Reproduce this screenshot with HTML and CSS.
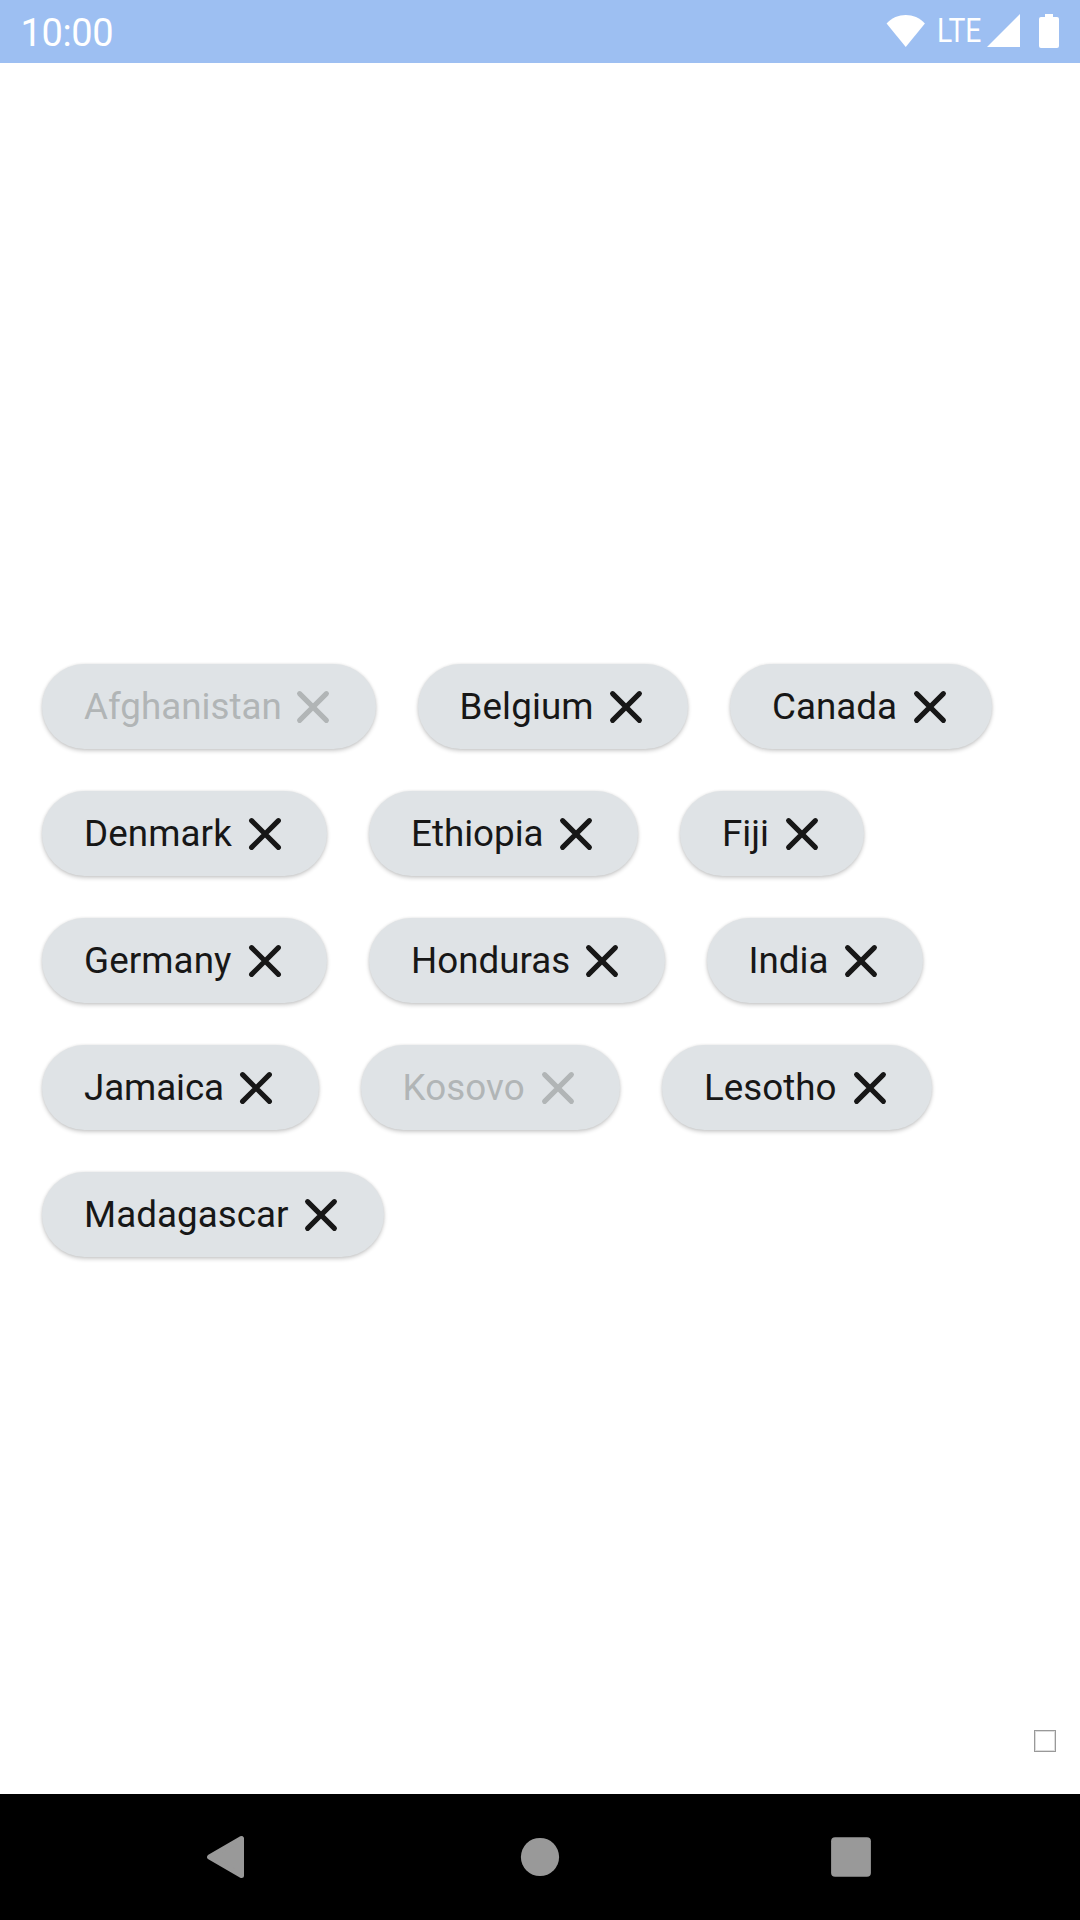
FILE: index.html
```html
<!DOCTYPE html>
<html lang="en">
<head>
<meta charset="utf-8">
<title>Countries</title>
<link rel="stylesheet" href="styles.css">
</head>
<body>
<svg class="symbols" aria-hidden="true">
  <symbol id="close" viewBox="0 0 42 42"><path d="M7.6 7.6L34.4 34.4M34.4 7.6L7.6 34.4" fill="none" stroke="currentColor" stroke-width="5.1" stroke-linecap="round"/></symbol>
</svg>
<header class="status-bar">
  <span class="clock">10:00</span>
  <svg class="wifi" viewBox="0 0 40 34" preserveAspectRatio="none"><path d="M.6 9.5C11 -1.8 29-1.8 39.4 9.5L20 33Z" fill="#fff"/></svg>
  <span class="network">LTE</span>
  <svg class="signal" viewBox="0 0 33 33"><path d="M33 0V33H0Z" fill="#fff"/></svg>
  <svg class="battery" viewBox="0 0 20 34"><path d="M6 0H14V3H18Q20 3 20 5V32Q20 34 18 34H2Q0 34 0 32V5Q0 3 2 3H6Z" fill="#fff"/></svg>
</header>
<main class="content">
  <div class="chips">
    <div class="chip afghanistan disabled"><span>Afghanistan</span><svg class="close"><use href="#close"/></svg></div>
    <div class="chip belgium"><span>Belgium</span><svg class="close"><use href="#close"/></svg></div>
    <div class="chip canada"><span>Canada</span><svg class="close"><use href="#close"/></svg></div>
    <div class="chip denmark"><span>Denmark</span><svg class="close"><use href="#close"/></svg></div>
    <div class="chip ethiopia"><span>Ethiopia</span><svg class="close"><use href="#close"/></svg></div>
    <div class="chip fiji"><span>Fiji</span><svg class="close"><use href="#close"/></svg></div>
    <div class="chip germany"><span>Germany</span><svg class="close"><use href="#close"/></svg></div>
    <div class="chip honduras"><span>Honduras</span><svg class="close"><use href="#close"/></svg></div>
    <div class="chip india"><span>India</span><svg class="close"><use href="#close"/></svg></div>
    <div class="chip jamaica"><span>Jamaica</span><svg class="close"><use href="#close"/></svg></div>
    <div class="chip kosovo disabled"><span>Kosovo</span><svg class="close"><use href="#close"/></svg></div>
    <div class="chip lesotho"><span>Lesotho</span><svg class="close"><use href="#close"/></svg></div>
    <div class="chip madagascar"><span>Madagascar</span><svg class="close"><use href="#close"/></svg></div>
  </div>
  <div class="marker"></div>
</main>
<nav class="nav-bar">
  <svg class="nav-icon" viewBox="0 0 44 44"><path d="M2.6 22L34.5 3.5V40.5Z" fill="#999" stroke="#999" stroke-width="5" stroke-linejoin="round"/></svg>
  <svg class="nav-icon" viewBox="0 0 44 44"><circle cx="22" cy="22" r="19.1" fill="#999"/></svg>
  <svg class="nav-icon" viewBox="0 0 44 44"><rect x="2.1" y="2.2" width="39.8" height="39.6" rx="4" fill="#999"/></svg>
</nav>
</body>
</html>
```
FILE: styles.css
```css
* { box-sizing: border-box; }
body {
  margin: 0;
  width: 1080px;
  height: 1920px;
  display: flex;
  flex-direction: column;
  overflow: hidden;
  background: #fff;
  font-family: Roboto, sans-serif;
}
svg { display: block; flex: none; }
.symbols { position: absolute; width: 0; height: 0; }
.status-bar {
  height: 63px;
  padding: 0 21px 0 20.5px;
  display: flex;
  align-items: flex-start;
  background: #9dbff2;
  color: #fff;
}
.clock {
  flex: 1;
  padding-top: 10px;
  font-size: 38px;
  line-height: 46px;
  letter-spacing: -.4px;
}
.wifi { width: 39.5px; height: 34px; margin-top: 14px; }
.network {
  width: 43px;
  margin: 12px 7px 0 11.5px;
  font-size: 32.5px;
  line-height: 38px;
  transform: scaleX(.87);
  transform-origin: left;
}
.signal { width: 33px; height: 33px; margin: 14px 19px 0 0; }
.battery { width: 20px; height: 34px; margin-top: 14px; }
.content {
  flex: 1;
  display: flex;
  flex-direction: column;
  padding: 601px 21px 42px 42px;
}
.chips {
  width: 960px;
  display: flex;
  flex-wrap: wrap;
  gap: 42px;
}
.chip {
  height: 85px;
  padding: 0 41.5px 0 42px;
  display: flex;
  align-items: center;
  justify-content: space-between;
  border-radius: 43px;
  background: #dfe3e6;
  color: #171717;
  font-size: 36.75px;
  line-height: 43px;
  box-shadow: 0 2px 4px rgba(0, 0, 0, .2), 0 0 3px rgba(0, 0, 0, .08);
}
.disabled { color: #b1b5b6; }
.afghanistan { width: 333.5px; }
.belgium { width: 270.5px; letter-spacing: .12px; }
.canada { width: 262px; }
.denmark, .germany { width: 285px; letter-spacing: .1px; }
.ethiopia { width: 269px; }
.fiji { width: 184px; }
.honduras { width: 295.5px; }
.india { width: 216.5px; }
.jamaica { width: 276.5px; letter-spacing: -.1px; }
.kosovo { width: 259.5px; letter-spacing: .1px; }
.lesotho { width: 270px; }
.madagascar { width: 341.5px; letter-spacing: .05px; }
.close { width: 42px; height: 42px; }
.marker {
  width: 22px;
  height: 22px;
  margin: auto 3px 0 auto;
  border: 1px solid #999;
  box-shadow: inset 0 0 0 1px #ddd;
}
.nav-bar {
  height: 126px;
  padding: 0 207px;
  display: flex;
  align-items: center;
  justify-content: space-between;
  background: #000;
}
.nav-icon { width: 44px; height: 44px; }
```
